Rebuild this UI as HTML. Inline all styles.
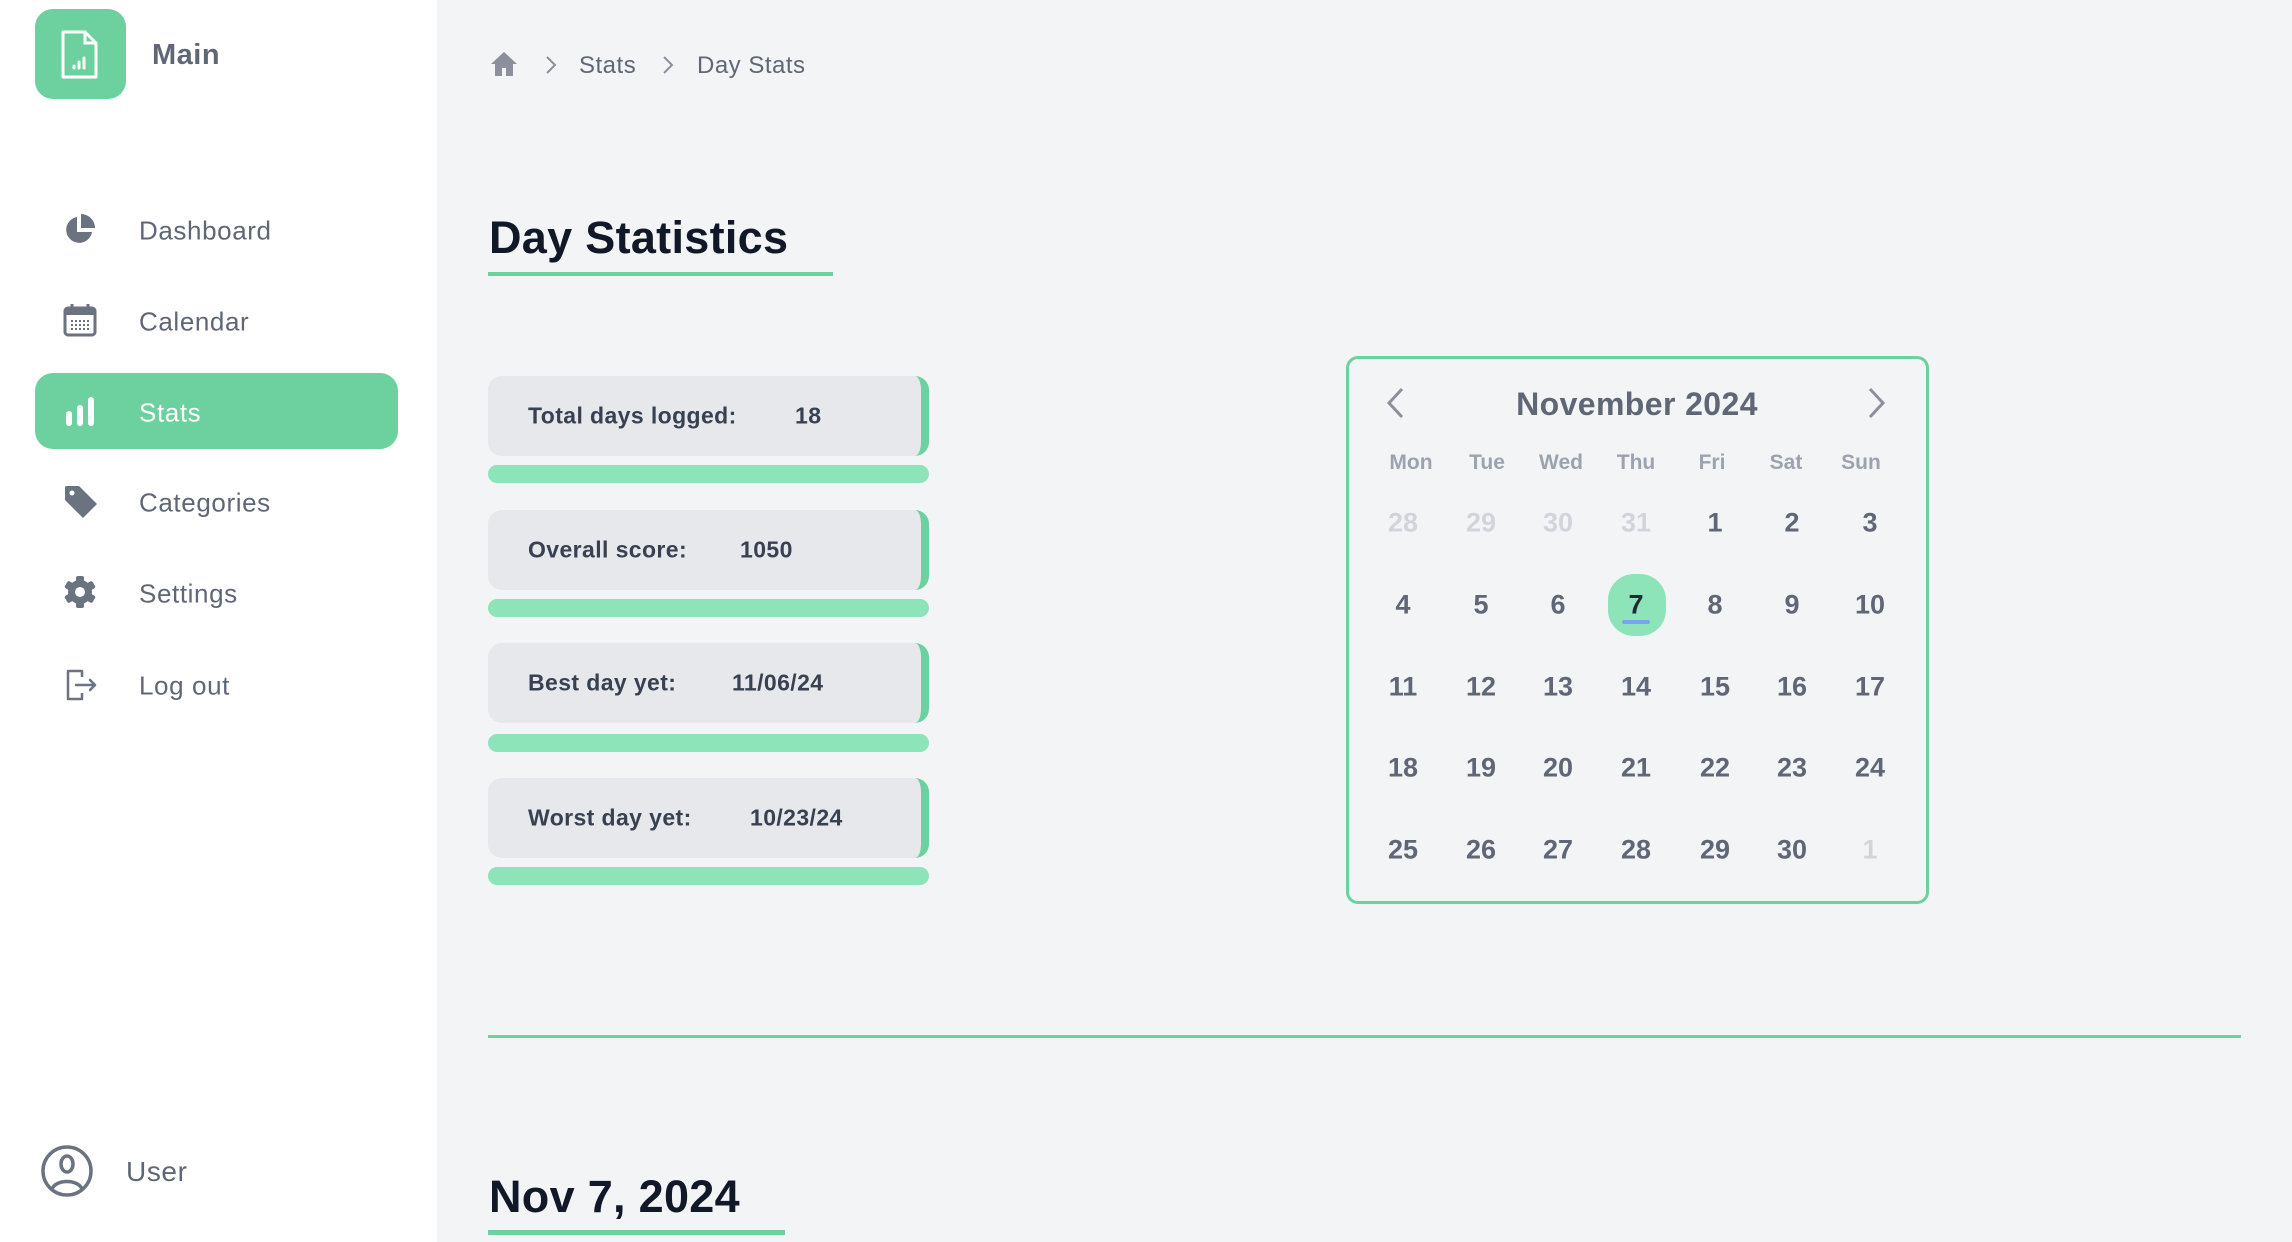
<!DOCTYPE html>
<html><head><meta charset="utf-8"><style>
*{margin:0;padding:0;box-sizing:border-box}
body{width:2292px;height:1242px;overflow:hidden;background:#f3f4f6;font-family:"Liberation Sans",sans-serif;position:relative}
.a{position:absolute}
.side{left:0;top:0;width:437px;height:1242px;background:#fff}
.nav{left:139px;font-size:26px;color:#5f6675;transform:translateY(-50%);letter-spacing:0.6px;margin-top:2px}
.ico{left:62px;width:36px;height:36px;transform:translateY(-50%)}
.card{left:488px;width:441px;height:80px;background:#e7e8ec;border-radius:14px;border-right:8px solid #6cd19e;font-size:23px;font-weight:bold;color:#374151;letter-spacing:0.4px}
.card span{position:absolute;top:50%;transform:translateY(-50%)}
.bar{left:488px;width:441px;height:18px;background:#8de4b8;border-radius:9px}
.wd{font-size:21px;font-weight:bold;color:#9ca3af;width:80px;text-align:center;transform:translate(-50%,-50%);margin-top:2px}
.d{font-size:27px;font-weight:bold;color:#5f6675;width:80px;text-align:center;transform:translate(-50%,-50%);margin-top:1px}
.g{color:#d1d5db}
</style></head><body>
<div class="a side"></div>
<div class="a" style="left:35px;top:9px;width:91px;height:90px;background:#6cd19e;border-radius:18px"></div>
<svg class="a" style="left:58px;top:30px" width="44" height="50" viewBox="0 0 44 50"><path d="M5 2h22l11 11v34H5z" fill="none" stroke="#fff" stroke-width="3" stroke-linejoin="round"/><path d="M27 2v11h11" fill="none" stroke="#fff" stroke-width="3"/><path d="M16 38v-2M21 38v-6M26 38v-10" stroke="#fff" stroke-width="3" stroke-linecap="round"/></svg>
<div class="a" style="left:152px;top:39px;font-size:29px;font-weight:bold;color:#5f6675;letter-spacing:0.5px">Main</div>

<div class="a" style="left:35px;top:373px;width:363px;height:76px;background:#6cd19e;border-radius:18px"></div>

<svg class="a ico" style="top:229px" viewBox="0 0 36 36"><path d="M15 6A13 13 0 1 0 30 21H15z" fill="#6b7280"/><path d="M19 3v14h14A14 14 0 0 0 19 3z" fill="#6b7280"/></svg>
<div class="a nav" style="top:229px">Dashboard</div>
<svg class="a ico" style="top:320px" viewBox="0 0 36 36"><rect x="3" y="6" width="30" height="27" rx="3" fill="none" stroke="#6b7280" stroke-width="3"/><rect x="3" y="6" width="30" height="7" fill="#6b7280"/><path d="M10 2v7M26 2v7" stroke="#6b7280" stroke-width="3"/><path d="M9 19h18M9 23h18M9 27h18" stroke="#6b7280" stroke-width="2" stroke-dasharray="2 2"/></svg>
<div class="a nav" style="top:320px">Calendar</div>
<svg class="a ico" style="top:411px" viewBox="0 0 36 36"><rect x="4" y="18" width="6" height="15" rx="3" fill="#fff"/><rect x="15" y="12" width="6" height="21" rx="3" fill="#fff"/><rect x="26" y="4" width="6" height="29" rx="3" fill="#fff"/></svg>
<div class="a nav" style="top:411px;color:#fff">Stats</div>
<svg class="a ico" style="top:501px" viewBox="0 0 36 36"><path d="M3 4v13l18 18 14-14L17 3H4z" fill="#6b7280"/><circle cx="10" cy="10" r="2.5" fill="#fff"/></svg>
<div class="a nav" style="top:501px">Categories</div>
<svg class="a ico" style="top:592px" viewBox="0 0 36 36"><g fill="#6b7280"><circle cx="18" cy="18" r="12"/><rect x="14" y="2" width="8" height="32" rx="2"/><rect x="14" y="2" width="8" height="32" rx="2" transform="rotate(60 18 18)"/><rect x="14" y="2" width="8" height="32" rx="2" transform="rotate(120 18 18)"/></g><circle cx="18" cy="18" r="5" fill="#fff"/></svg>
<div class="a nav" style="top:592px">Settings</div>
<svg class="a ico" style="top:684px" viewBox="0 0 36 36"><path d="M20 11V5H6v28h14v-6" fill="none" stroke="#6b7280" stroke-width="2.5" stroke-linejoin="round"/><path d="M14 19h19M28 14l5 5-5 5" fill="none" stroke="#6b7280" stroke-width="2.5" stroke-linecap="round" stroke-linejoin="round"/></svg>
<div class="a nav" style="top:684px">Log out</div>

<svg class="a" style="left:40px;top:1144px" width="54" height="54" viewBox="0 0 54 54"><circle cx="27" cy="27" r="24" fill="none" stroke="#6b7280" stroke-width="3.5"/><ellipse cx="27" cy="20" rx="6" ry="8" fill="none" stroke="#6b7280" stroke-width="3.5"/><path d="M12 45c4-10 26-10 30 0" fill="none" stroke="#6b7280" stroke-width="3.5"/></svg>
<div class="a" style="left:126px;top:1156px;font-size:28px;color:#5f6675;letter-spacing:0.6px">User</div>

<svg class="a" style="left:490px;top:50px" width="28" height="28" viewBox="0 0 28 28"><path d="M14 2L1 14h4v12h7v-8h4v8h7V14h4z" fill="#8b909c"/></svg>
<svg class="a" style="left:545px;top:55px" width="12" height="20" viewBox="0 0 12 20"><path d="M2 2l8 8-8 8" fill="none" stroke="#8b909c" stroke-width="2"/></svg>
<div class="a" style="left:579px;top:52px;font-size:24px;color:#5f6675;letter-spacing:0.5px">Stats</div>
<svg class="a" style="left:662px;top:55px" width="12" height="20" viewBox="0 0 12 20"><path d="M2 2l8 8-8 8" fill="none" stroke="#8b909c" stroke-width="2"/></svg>
<div class="a" style="left:697px;top:52px;font-size:24px;color:#5f6675;letter-spacing:0.5px">Day Stats</div>

<div class="a" style="left:489px;top:212px;font-size:45px;font-weight:bold;color:#111827;letter-spacing:0.3px">Day Statistics</div>
<div class="a" style="left:488px;top:272px;width:345px;height:4px;background:#6cd19e"></div>

<div class="a card" style="top:376px"><span style="left:40px">Total days logged:</span><span style="left:307px">18</span></div>
<div class="a bar" style="top:465px"></div>
<div class="a card" style="top:510px"><span style="left:40px">Overall score:</span><span style="left:252px">1050</span></div>
<div class="a bar" style="top:599px"></div>
<div class="a card" style="top:643px"><span style="left:40px">Best day yet:</span><span style="left:244px">11/06/24</span></div>
<div class="a bar" style="top:734px"></div>
<div class="a card" style="top:778px"><span style="left:40px">Worst day yet:</span><span style="left:262px">10/23/24</span></div>
<div class="a bar" style="top:867px"></div>

<div class="a" style="left:1346px;top:356px;width:583px;height:548px;border:3px solid #6cd19e;border-radius:12px"></div>
<svg class="a" style="left:1384px;top:386px" width="24" height="34" viewBox="0 0 24 34"><path d="M18 3L5 17l13 14" fill="none" stroke="#8b909c" stroke-width="3"/></svg>
<svg class="a" style="left:1864px;top:386px" width="24" height="34" viewBox="0 0 24 34"><path d="M6 3l13 14L6 31" fill="none" stroke="#8b909c" stroke-width="3"/></svg>
<div class="a" style="left:1437px;top:386px;width:400px;text-align:center;font-size:32px;font-weight:bold;color:#5f6675;letter-spacing:0.4px">November 2024</div>

<div class="a wd" style="left:1411px;top:461px">Mon</div>
<div class="a wd" style="left:1487px;top:461px">Tue</div>
<div class="a wd" style="left:1561px;top:461px">Wed</div>
<div class="a wd" style="left:1636px;top:461px">Thu</div>
<div class="a wd" style="left:1712px;top:461px">Fri</div>
<div class="a wd" style="left:1786px;top:461px">Sat</div>
<div class="a wd" style="left:1861px;top:461px">Sun</div>

<div class="a" style="left:1608px;top:574px;width:58px;height:62px;border-radius:26px;background:#8de4b8"></div>
<div class="a" style="left:1622px;top:620px;width:28px;height:4px;border-radius:2px;background:#7ba3f0"></div>

<div class="a d g" style="left:1403px;top:522px">28</div><div class="a d g" style="left:1481px;top:522px">29</div><div class="a d g" style="left:1558px;top:522px">30</div><div class="a d g" style="left:1636px;top:522px">31</div><div class="a d" style="left:1715px;top:522px">1</div><div class="a d" style="left:1792px;top:522px">2</div><div class="a d" style="left:1870px;top:522px">3</div>
<div class="a d" style="left:1403px;top:604px">4</div><div class="a d" style="left:1481px;top:604px">5</div><div class="a d" style="left:1558px;top:604px">6</div><div class="a d" style="left:1636px;top:604px;color:#1f2937">7</div><div class="a d" style="left:1715px;top:604px">8</div><div class="a d" style="left:1792px;top:604px">9</div><div class="a d" style="left:1870px;top:604px">10</div>
<div class="a d" style="left:1403px;top:686px">11</div><div class="a d" style="left:1481px;top:686px">12</div><div class="a d" style="left:1558px;top:686px">13</div><div class="a d" style="left:1636px;top:686px">14</div><div class="a d" style="left:1715px;top:686px">15</div><div class="a d" style="left:1792px;top:686px">16</div><div class="a d" style="left:1870px;top:686px">17</div>
<div class="a d" style="left:1403px;top:767px">18</div><div class="a d" style="left:1481px;top:767px">19</div><div class="a d" style="left:1558px;top:767px">20</div><div class="a d" style="left:1636px;top:767px">21</div><div class="a d" style="left:1715px;top:767px">22</div><div class="a d" style="left:1792px;top:767px">23</div><div class="a d" style="left:1870px;top:767px">24</div>
<div class="a d" style="left:1403px;top:849px">25</div><div class="a d" style="left:1481px;top:849px">26</div><div class="a d" style="left:1558px;top:849px">27</div><div class="a d" style="left:1636px;top:849px">28</div><div class="a d" style="left:1715px;top:849px">29</div><div class="a d" style="left:1792px;top:849px">30</div><div class="a d g" style="left:1870px;top:849px">1</div>

<div class="a" style="left:488px;top:1035px;width:1753px;height:3px;background:#6cd19e"></div>
<div class="a" style="left:489px;top:1171px;font-size:45px;font-weight:bold;color:#111827;letter-spacing:0.3px">Nov 7, 2024</div>
<div class="a" style="left:488px;top:1230px;width:297px;height:5px;background:#6cd19e"></div>
</body></html>
